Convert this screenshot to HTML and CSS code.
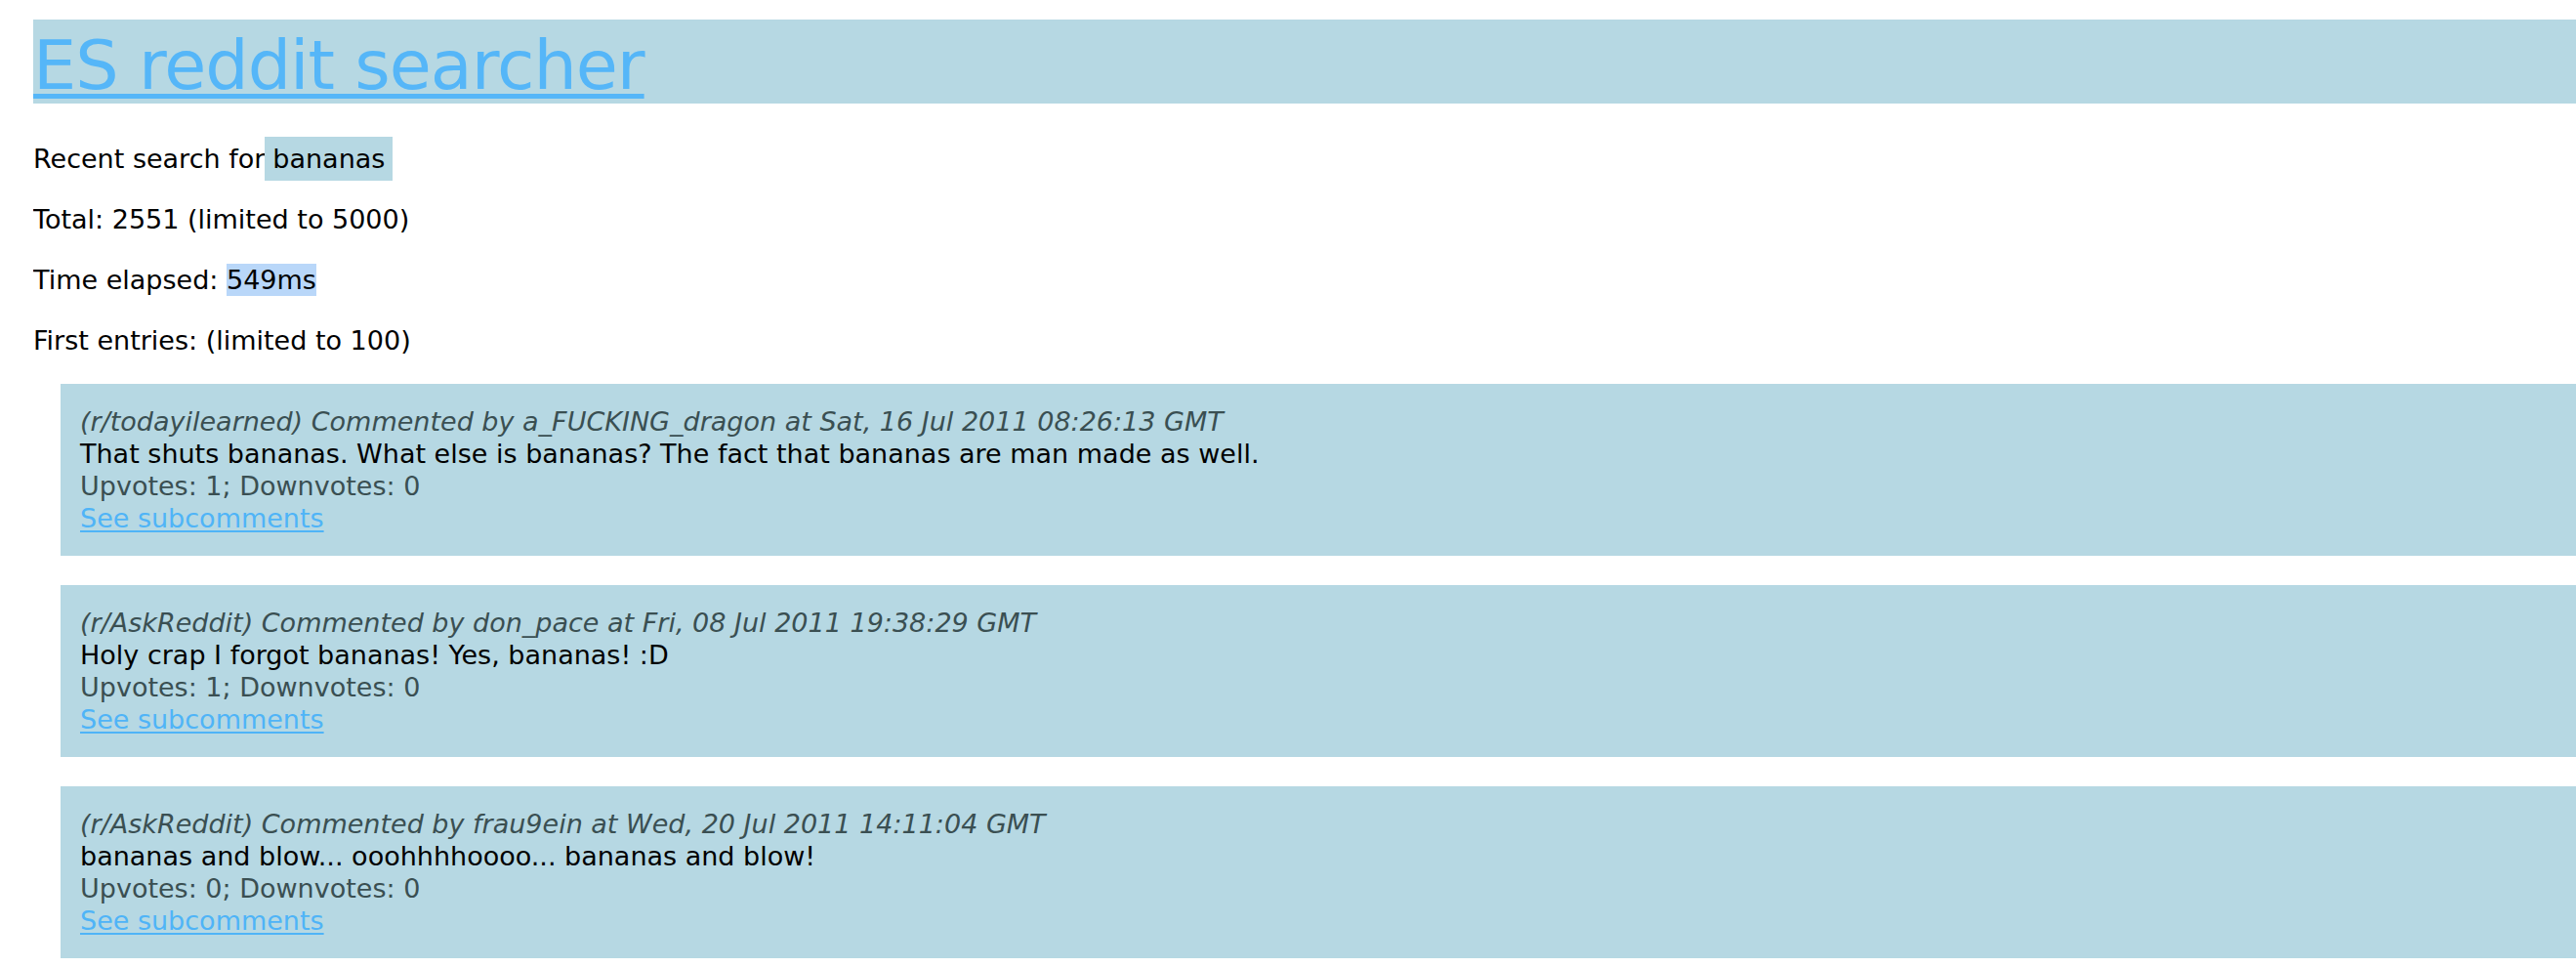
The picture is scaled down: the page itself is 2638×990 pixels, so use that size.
FILE: index.html
```html
<!DOCTYPE html>
<html lang="en">
<head>
<meta charset="utf-8">
<title>ES reddit searcher</title>
<link rel="stylesheet" href="styles.css">
</head>
<body>
<header class="site-header">
  <h1 class="site-title"><a href="#" class="title-link">ES reddit searcher</a></h1>
</header>
<p class="info">Recent search for<span class="query">bananas</span></p>
<p class="info">Total: 2551 (limited to 5000)</p>
<p class="info">Time elapsed: <span class="elapsed">549ms</span></p>
<p class="info">First entries: (limited to 100)</p>
<ul class="results">
  <li class="card">
    <div class="meta">(r/todayilearned) Commented by a_FUCKING_dragon at Sat, 16 Jul 2011 08:26:13 GMT</div>
    <div class="body">That shuts bananas. What else is bananas? The fact that bananas are man made as well.</div>
    <div class="votes">Upvotes: 1; Downvotes: 0</div>
    <a href="#" class="sub-link">See subcomments</a>
  </li>
  <li class="card">
    <div class="meta">(r/AskReddit) Commented by don_pace at Fri, 08 Jul 2011 19:38:29 GMT</div>
    <div class="body">Holy crap I forgot bananas! Yes, bananas! :D</div>
    <div class="votes">Upvotes: 1; Downvotes: 0</div>
    <a href="#" class="sub-link">See subcomments</a>
  </li>
  <li class="card">
    <div class="meta">(r/AskReddit) Commented by frau9ein at Wed, 20 Jul 2011 14:11:04 GMT</div>
    <div class="body">bananas and blow... ooohhhhoooo... bananas and blow!</div>
    <div class="votes">Upvotes: 0; Downvotes: 0</div>
    <a href="#" class="sub-link">See subcomments</a>
  </li>
</ul>
</body>
</html>
```

FILE: styles.css
```css
html, body {
  background: #ffffff;
}

body {
  margin: 20px 0 0 34px;
  font-family: "DejaVu Sans", "Lucida Grande", Verdana, sans-serif;
  font-size: 27px;
  color: #000000;
}

.site-header {
  background: #b6d8e3;
  height: 86px;
  margin: 0 0 39px 0;
}

.site-title {
  margin: 0;
  padding-top: 8px;
  font-size: 70px;
  font-weight: normal;
  line-height: 78px;
  letter-spacing: -1px;
}

.title-link {
  color: #55b6f8;
  text-decoration: underline;
  text-decoration-thickness: 5px;
  text-underline-offset: 5px;
}

.info {
  margin: 27px 0;
  line-height: 35px;
}

.query {
  background: #b6d8e3;
  padding: 7px 8px;
}

.elapsed {
  background: #b9d7f9;
  padding: 1px 0;
}

.results {
  list-style: none;
  margin: 27px 0 0 28px;
  padding: 0;
  display: flex;
  flex-direction: column;
  gap: 30px;
}

.card {
  background: #b6d8e3;
  padding: 22px 20px;
  line-height: 33px;
  display: flex;
  flex-direction: column;
  align-items: flex-start;
}

.meta {
  font-style: italic;
  color: #3a4f52;
}

.body {
  color: #000000;
}

.votes {
  color: #3a4f52;
}

.sub-link {
  color: #4fb4f7;
  text-decoration: underline;
  text-decoration-thickness: 2px;
  text-underline-offset: 3px;
}
```
